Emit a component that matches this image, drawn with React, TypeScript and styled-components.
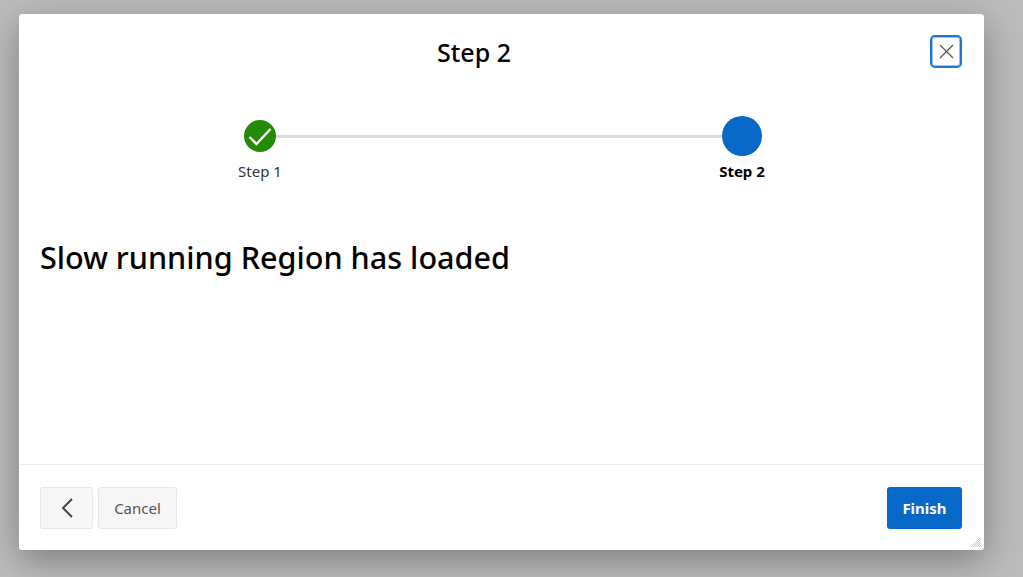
import React from 'react';
import styled, { createGlobalStyle } from 'styled-components';

const GlobalStyle = createGlobalStyle`
  html, body {
    margin: 0;
    padding: 0;
    height: 100%;
    overflow: hidden;
  }
  body {
    background: #bcbcbc;
    font-family: 'Noto Sans', 'Open Sans', sans-serif;
  }
`;

const Page = styled.div`
  box-sizing: border-box;
  width: 1023px;
  height: 577px;
  padding: 14px 39px 27px 19px;
  background: #bcbcbc;
`;

const Dialog = styled.div`
  position: relative;
  display: flex;
  flex-direction: column;
  height: 536px;
  background: #fff;
  border-radius: 3px;
  box-shadow: 0 10px 36px rgba(0, 0, 0, 0.34);
`;

const Header = styled.header`
  display: flex;
  align-items: flex-start;
  height: 55px;
  padding: 21px 22px 0 21px;
`;

const Title = styled.h1`
  flex: 1;
  margin: 0;
  padding: 1px 22px 0 0;
  font-size: 25px;
  line-height: 33px;
  font-weight: 500;
  color: #000;
  text-align: center;
`;

const CloseButton = styled.button`
  display: flex;
  align-items: center;
  justify-content: center;
  box-sizing: border-box;
  width: 32px;
  height: 33px;
  padding: 0;
  color: #555;
  background: #fff;
  border: 2px solid #1b77d2;
  border-radius: 5px;
  box-shadow: inset 0 0 0 1px rgba(27, 119, 210, 0.45);
`;

const Stepper = styled.div`
  display: flex;
  justify-content: space-between;
  height: 75px;
  margin: 26px 242px 0 241px;
  background: linear-gradient(#dcdcdc, #dcdcdc) no-repeat 0 19px / 100% 3px;
`;

const Step = styled.div`
  display: flex;
  flex-direction: column;
  align-items: center;
  width: 90px;
  margin: 0 -45px;
`;

const Marker = styled.div<{ $size: number; $color: string }>`
  display: flex;
  align-items: center;
  justify-content: center;
  width: ${(p) => p.$size}px;
  height: ${(p) => p.$size}px;
  margin: ${(p) => (40 - p.$size) / 2}px 0;
  background: ${(p) => p.$color};
  border-radius: 50%;
`;

const StepLabel = styled.span<{ $active?: boolean }>`
  margin-top: 5px;
  font-size: 15px;
  line-height: 20px;
  font-weight: ${(p) => (p.$active ? 700 : 400)};
  color: ${(p) => (p.$active ? '#000' : '#333')};
`;

const Content = styled.main`
  flex: 1;
  padding: 46px 21px 0;
`;

const Heading = styled.h2`
  margin: 0;
  font-size: 30.6px;
  line-height: 40px;
  font-weight: 500;
  color: #000;
`;

const Footer = styled.footer`
  display: flex;
  align-items: flex-start;
  gap: 5px;
  height: 86px;
  box-sizing: border-box;
  padding: 22px 22px 0 21px;
  border-top: 1px solid #ececec;
`;

const SecondaryButton = styled.button<{ $width: number }>`
  display: flex;
  align-items: center;
  justify-content: center;
  box-sizing: border-box;
  width: ${(p) => p.$width}px;
  height: 42px;
  padding: 0;
  font-family: inherit;
  font-size: 15px;
  color: #555;
  background: #f6f6f6;
  border: 1px solid #e6e6e6;
  border-radius: 3px;
`;

const FinishButton = styled.button`
  box-sizing: border-box;
  width: 75px;
  height: 42px;
  margin-left: auto;
  padding: 0;
  font-family: inherit;
  font-size: 15px;
  font-weight: 700;
  color: #fff;
  background: #0768c8;
  border: none;
  border-radius: 3px;
`;

const ResizeGrip = styled.svg`
  position: absolute;
  right: 3px;
  bottom: 3px;
`;

export default function App() {
  return (
    <Page>
      <GlobalStyle />
      <Dialog>
        <Header>
          <Title>Step 2</Title>
          <CloseButton aria-label="Close">
            <svg width="15" height="15" viewBox="0 0 15 15" fill="none" stroke="currentColor" strokeWidth="1.2">
              <path d="M1 1l13 13M14 1L1 14" />
            </svg>
          </CloseButton>
        </Header>
        <Stepper>
          <Step>
            <Marker $size={32} $color="#258a04">
              <svg width="24" height="19" viewBox="0 0 24 19" fill="none" stroke="#fff" strokeWidth="2.4">
                <path d="M1.5 10l7 7L22.5 2" />
              </svg>
            </Marker>
            <StepLabel>Step 1</StepLabel>
          </Step>
          <Step>
            <Marker $size={40} $color="#0768c8" />
            <StepLabel $active>Step 2</StepLabel>
          </Step>
        </Stepper>
        <Content>
          <Heading>Slow running Region has loaded</Heading>
        </Content>
        <Footer>
          <SecondaryButton $width={53} aria-label="Previous">
            <svg width="12" height="20" viewBox="0 0 12 20" fill="none" stroke="#444" strokeWidth="2">
              <path d="M11 1L2 10l9 9" />
            </svg>
          </SecondaryButton>
          <SecondaryButton $width={79}>Cancel</SecondaryButton>
          <FinishButton>Finish</FinishButton>
        </Footer>
        <ResizeGrip width="10" height="10" viewBox="0 0 10 10" stroke="#c4c4c4" strokeWidth="1">
          <path d="M0 10L10 0M2 10l8-8M4 10l6-6M6 10l4-4M8 10l2-2" />
        </ResizeGrip>
      </Dialog>
    </Page>
  );
}
